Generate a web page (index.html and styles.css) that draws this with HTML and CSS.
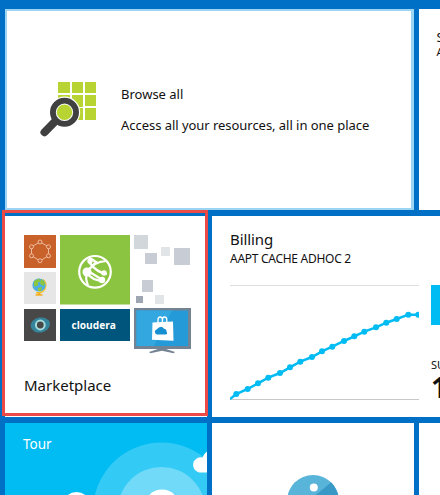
FILE: index.html
```html
<!DOCTYPE html>
<html lang="en">
<head>
<meta charset="utf-8">
<title>Startboard</title>
<link rel="stylesheet" href="styles.css">
</head>
<body>
<main class="board">
  <section class="tile browse">
    <svg class="browse-icon" viewBox="40 82 57 56" width="57" height="56">
      <path fill="#b8d432" d="M58 82h12v11H58zM72 82h11v11H72zM85 82h11v11H85zM58 95h12v12H58zM72 95h11v12H72zM85 95h11v11H85zM72 108h11v12H72zM85 108h11v12H85z"/>
      <circle cx="64.500" cy="112.300" r="15.700" fill="#fff"/>
      <path d="M44.500 132.200L56 120.500" stroke="#404040" stroke-width="8" stroke-linecap="round"/>
      <circle cx="64.500" cy="112.300" r="11.600" fill="#fff" stroke="#404040" stroke-width="5.800"/>
      <circle cx="64.500" cy="112.300" r="7.700" fill="#b8d432"/>
    </svg>
    <div class="browse-text">
      <p>Browse all</p>
      <p class="wide-line">Access all your resources, all in one place</p>
    </div>
  </section>

  <section class="tile service">
    <h2>S</h2>
    <h3>A</h3>
  </section>

  <section class="tile market">
    <svg class="market-art" viewBox="24 235 167 120" width="167" height="120">
      <path fill="#c9622a" d="M24 235h32v33H24z"/>
      <g fill="#c9622a" stroke="#efc3aa" stroke-width=".9">
        <path d="M40 242l8.500 4.800v9L40 260.800l-8.500-5v-9z"/>
        <circle cx="40" cy="242" r="2"/><circle cx="48.500" cy="246.800" r="2"/><circle cx="48.500" cy="255.800" r="2"/>
        <circle cx="40" cy="260.800" r="2"/><circle cx="31.500" cy="255.800" r="2"/><circle cx="31.500" cy="246.800" r="2"/>
      </g>
      <path fill="#8bc440" d="M60 235h70v69.500H60z"/>
      <g fill="none" stroke="#fff">
        <circle cx="95" cy="271.800" r="15.800" stroke-width="2.200"/>
        <path stroke-width="2.200" d="M87 272Q93 262 106 261M87 272L96 262Q92 259 89 258M87 272Q91 281 105 281M88 271L101 279M89 262Q97 273 107 274M87 272Q85 279 88 285"/>
      </g>
      <g fill="#fff"><circle cx="87" cy="272" r="4.500"/><circle cx="102" cy="280" r="3.200"/><circle cx="104" cy="273" r="2.700"/><circle cx="90" cy="261" r="2.700"/></g>
      <path fill="#e6e6e6" d="M24 272h32v32H24z"/>
      <path d="M43 279.500a7.500 7.500 0 0 1-4 13.300h-3" fill="none" stroke="#f6c52f" stroke-width="1.500"/>
      <circle cx="39" cy="285" r="6.600" fill="#4eaee0"/>
      <path fill="#8cc63f" d="M34 281l5-2.500 1.500 3-2.500 1v3l-4 1zM41 279l4 3-1 4-4-2zM38 288l4-1-1 4h-3z"/>
      <path fill="#f4ae24" d="M37.500 292.500h3v1.800h2v1.500h-7v-1.500h2z"/>
      <path fill="#484848" d="M24 309h32v32H24z"/>
      <ellipse cx="40.300" cy="325" rx="9.700" ry="7.500" fill="#35849b" transform="rotate(-10 40.300 325)"/>
      <circle cx="40.300" cy="325" r="4.400" fill="#484848" stroke="#a5dcdc" stroke-width="2"/>
      <path fill="#00557c" d="M60 309h70v32H60z"/>
      <text class="cloudera" x="71.500" y="328.500" textLength="44.500" lengthAdjust="spacingAndGlyphs">cloudera</text>
      <path fill="#d2d7db" d="M134 235h14v14h-14z"/>
      <path fill="#c8ccd5" d="M145 253h12v11h-12zM174 248h16v17h-16zM142 280h11v12h-11z"/>
      <path fill="#e2e5e8" d="M161 247h9v9h-9zM155 295h9v9h-9z"/>
      <path fill="#9da6b1" d="M136 296h7v7h-7z"/>
      <path fill="#748394" d="M134 308h57v41h-57zM158 349h8l9 3-1.500 1.300-11.500-2.500-11.500 2.500-1.500-1.300z"/>
      <path fill="#249bd8" d="M136.500 310.500H188V346h-51.500z"/>
      <path fill="#33a8e0" d="M136.500 310.500H172L154 346h-17.500z"/>
      <path d="M158 323v-3q0-3 2.200-3t2.200 3v3M162.400 323v-3q0-3 2.200-3t2.200 3v3" fill="none" stroke="#fff" stroke-width="1.300"/>
      <path fill="#fff" d="M152.500 322.500l20.500-1 .5 19.200-21.500-1z"/>
      <path fill="#168fd1" d="M157 334.500a2.700 2.700 0 0 1 0-5.300 4 4 0 0 1 7-.5 2.800 2.800 0 0 1 2.500 3 1.800 1.800 0 0 1-.5 2.800z"/>
    </svg>
    <h2 class="market-title">Marketplace</h2>
    <div class="highlight"></div>
  </section>

  <section class="tile billing">
    <div class="billing-main">
      <h2>Billing</h2>
      <h3>AAPT CACHE ADHOC 2</h3>
      <svg class="chart" viewBox="230 285 189 115" width="189" height="115">
        <path fill="#dedede" d="M230 285h189v1H230z"/>
        <path fill="#c8c8c8" d="M230 399h189v1H230z"/>
        <polyline fill="none" stroke="#00bcf2" stroke-width="2.500" points="230,399 236.300,394 247.700,389 258,383.300 268.300,377.700 280,373 290,367.300 300.300,361.700 312,357 322,351.300 332.300,346.700 344,341 354.300,336.300 364.300,331.700 376,327.300 386.300,322.700 396.700,319 408.300,314.700 419,314.700"/>
        <g fill="#00bcf2">
          <circle cx="236.300" cy="394" r="3"/><circle cx="247.700" cy="389" r="3"/><circle cx="258" cy="383.300" r="3"/><circle cx="268.300" cy="377.700" r="3"/><circle cx="280" cy="373" r="3"/><circle cx="290" cy="367.300" r="3"/><circle cx="300.300" cy="361.700" r="3"/><circle cx="312" cy="357" r="3"/><circle cx="322" cy="351.300" r="3"/><circle cx="332.300" cy="346.700" r="3"/><circle cx="344" cy="341" r="3"/><circle cx="354.300" cy="336.300" r="3"/><circle cx="364.300" cy="331.700" r="3"/><circle cx="376" cy="327.300" r="3"/><circle cx="386.300" cy="322.700" r="3"/><circle cx="396.700" cy="319" r="3"/><circle cx="408.300" cy="314.700" r="3"/><circle cx="418.300" cy="314.700" r="3"/>
        </g>
      </svg>
    </div>
    <div class="billing-side">
      <div class="meter"></div>
      <p class="side-label">SU</p>
      <p class="side-value">1</p>
    </div>
  </section>

  <section class="tile tour">
    <h2>Tour</h2>
    <svg class="tour-art" viewBox="5 423 202 72" width="202" height="72">
      <circle cx="161.500" cy="511" r="68.500" fill="#33caf5"/>
      <circle cx="161.500" cy="511" r="44" fill="#70daf8"/>
      <circle cx="162" cy="507" r="17.500" fill="#fff"/>
      <circle cx="76.500" cy="506" r="14" fill="#fff"/>
      <path fill="#fff" d="M199 472.500a7.700 7.700 0 1 1 3.500-15q1.500-4 4.500-6v21z"/>
    </svg>
  </section>

  <section class="tile feedback">
    <svg viewBox="288 475 52 20" width="52" height="20">
      <circle cx="313" cy="501" r="26" fill="#59b4d9"/>
      <path fill="#3999c6" d="M331 482.500a26 26 0 0 1-8 42.500l-10-24-4-.5z"/>
      <circle cx="313.800" cy="487.500" r="4" fill="#fff"/>
    </svg>
  </section>

  <section class="tile"></section>
</main>
</body>
</html>
```
FILE: styles.css
```css
* { box-sizing: border-box; }
body {
  margin: 0;
  background: #0070c6;
  color: #111;
  font-family: "Noto Sans", "Open Sans", sans-serif;
}
h2, h3, p { margin: 0; font-weight: 400; white-space: nowrap; }
svg { display: block; }
.board {
  display: grid;
  grid-template-columns: 202px 202px 21px;
  grid-template-rows: 201px 201px 72px;
  gap: 6px 5px;
  height: 495px;
  padding: 9px 0 0 5px;
  overflow: hidden;
}
.tile { background: #fff; min-width: 0; overflow: hidden; }
.browse {
  grid-column: span 2;
  display: flex;
  border: 2px solid #9bd5f3;
  border-right-width: 3px;
  padding: 71px 0 0 33px;
}
.browse-text { margin: 2px 0 0 24px; font-size: 13px; line-height: 20px; }
.browse-text p + p { margin-top: 11px; }
.wide-line { letter-spacing: -0.04px; }
.service { padding: 21px 0 0 17.5px; }
.service h2 { font-size: 13px; line-height: 15px; }
.service h3 { font-size: 11px; line-height: 13px; }
.market { position: relative; padding: 19px; overflow: visible; }
.market-title { margin-top: 19px; font-size: 15px; line-height: 22px; }
.highlight {
  position: absolute;
  inset: -6px -1px 1px -3px;
  border: 3px solid #eb4b47;
}
.cloudera {
  font: 700 11px "Open Sans", sans-serif;
  fill: #fff;
}
.billing { grid-column: span 2; display: flex; gap: 12px; padding: 12px 0 0 18px; }
.billing-main { flex: none; width: 189px; }
.billing h2 { font-size: 15px; line-height: 23px; letter-spacing: -0.1px; }
.billing h3 { font-size: 12px; line-height: 16px; letter-spacing: -0.28px; }
.chart { margin-top: 18px; }
.billing-side { flex: 1; min-width: 0; padding-top: 57px; overflow: hidden; }
.meter { height: 40px; background: #00bcf2; }
.side-label { margin-top: 33px; font-size: 11px; line-height: 14px; }
.side-value { font-size: 29px; line-height: 30px; font-weight: 700; }
.tour { display: grid; background: #00bcf2; color: #fff; }
.tour > * { grid-area: 1 / 1; }
.tour h2 { padding: 10px 18px; font-size: 13.5px; line-height: 22px; z-index: 1; }
.feedback { padding: 52px 76px 0; }
```
